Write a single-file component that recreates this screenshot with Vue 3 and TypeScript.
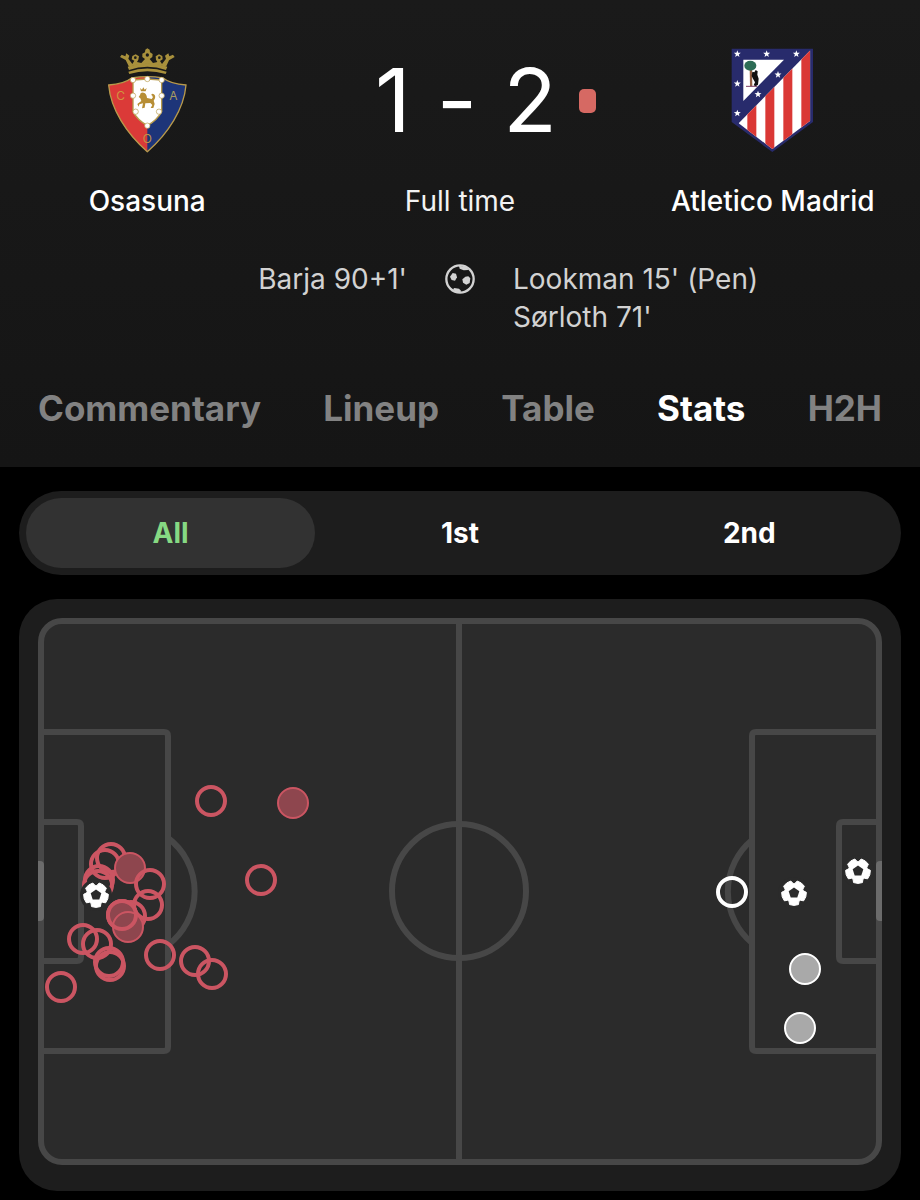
<script setup lang="ts">
import { ref } from 'vue'

type ShotKind = 'miss' | 'saved' | 'goal'
interface Shot {
  x: number
  y: number
  kind: ShotKind
  side: 'away' | 'home'
}

const tabs = ['Commentary', 'Lineup', 'Table', 'Stats', 'H2H']
const activeTab = ref('Stats')

const periods = ['All', '1st', '2nd']
const activePeriod = ref('All')

const shot = (side: Shot['side'], kind: ShotKind, x: number, y: number): Shot => ({ side, kind, x, y })

const shots: Shot[] = [
  shot('home', 'miss', 173, 183),
  shot('home', 'saved', 255, 185),
  shot('home', 'miss', 223, 262),
  shot('home', 'miss', 73, 240),
  shot('home', 'miss', 67, 246),
  shot('home', 'miss', 61, 262),
  shot('home', 'miss', 60, 267),
  shot('home', 'saved', 92, 250),
  shot('home', 'miss', 112, 266),
  shot('home', 'miss', 110, 287),
  shot('home', 'miss', 93, 298),
  shot('home', 'saved', 84, 297),
  shot('home', 'saved', 90, 309),
  shot('home', 'miss', 84, 297),
  shot('home', 'miss', 45, 321),
  shot('home', 'miss', 59, 326),
  shot('home', 'miss', 71, 344),
  shot('home', 'miss', 72, 348),
  shot('home', 'miss', 122, 337),
  shot('home', 'miss', 157, 343),
  shot('home', 'miss', 174, 356),
  shot('home', 'miss', 23, 369),
  shot('home', 'goal', 58, 277),
  shot('away', 'miss', 694, 274),
  shot('away', 'saved', 767, 351),
  shot('away', 'saved', 762, 410),
  shot('away', 'goal', 756, 275),
  shot('away', 'goal', 820, 253),
]

const polar = (radius: number, degrees: number): string => {
  const a = (degrees * Math.PI) / 180
  return `${(radius * Math.cos(a)).toFixed(2)},${(radius * Math.sin(a)).toFixed(2)}`
}

const lobes = [90, 162, 234, 306, 378]
const ballOutline = lobes
  .flatMap((a) => [polar(12.4, a - 21), polar(12.4, a), polar(12.4, a + 21), polar(9.6, a + 31), polar(9.6, a + 41)])
  .join(' ')
const ballCentre = lobes.map((a) => polar(5.6, a + 36)).join(' ')

const starShape = Array.from({ length: 10 }, (_, i) => polar(i % 2 ? 4.6 : 11, i * 36 - 90)).join(' ')
const stars: [number, number][] = [[70, 54], [158, 54], [247, 54], [192, 116], [132, 175], [70, 143], [70, 232]]
const beads: [number, number][] = [[132, 138], [175, 135], [218, 138], [132, 185], [218, 185], [140, 233], [210, 233], [175, 275]]
</script>

<template>
  <main class="page">
    <header class="match">
      <section class="summary">
        <div class="team">
          <svg class="crest" viewBox="54 42 240 315" role="img" aria-label="Osasuna crest">
            <g fill="#a8903c">
              <path d="M116 98 Q175 76 235 98 L231 108 Q175 88 120 108Z" />
              <path d="M118 113 Q175 94 233 113 L230 120 Q175 103 121 120Z" />
              <path d="M120 98 L110 78 L93 69 L98 62 L109 67 L112 58 L121 65 L118 74 L130 90 L136 80 L128 76 L130 66 L140 61 L150 67 L148 77 L144 84 L157 87 L168 75 L160 69 L160 59 L168 55 L169 47 L175 43 L182 47 L183 55 L191 60 L190 69 L182 75 L192 87 L205 84 L201 77 L200 67 L210 61 L220 66 L221 76 L213 81 L219 90 L231 74 L228 65 L238 58 L241 67 L252 62 L257 69 L240 79 L231 98 Q175 80 120 98Z" />
            </g>
            <g fill="#1a1a1a">
              <circle cx="139" cy="71" r="4" /><circle cx="175" cy="63" r="5" /><circle cx="211" cy="71" r="4" />
            </g>
            <path d="M59 153 Q105 150 128 132 Q175 124 222 132 Q245 150 291 153 C285 225 237 300 175 353 C113 300 65 225 59 153Z" fill="#db3a38" />
            <path d="M175 127 Q200 127 222 132 Q245 150 291 153 C285 225 237 300 175 353Z" fill="#1d3579" />
            <path d="M59 153 Q105 150 128 132 Q175 124 222 132 Q245 150 291 153 C285 225 237 300 175 353 C113 300 65 225 59 153Z" fill="none" stroke="#b79a4b" stroke-width="4" />
            <path d="M132 138 L175 135 L218 138 V233 Q205 258 175 275 Q145 258 132 233Z" fill="#fff" stroke="#b79a4b" stroke-width="4" />
            <circle v-for="([x, y], i) in beads" :key="i" :cx="x" :cy="y" r="8" fill="#fff" stroke="#b79a4b" stroke-width="2" />
            <g fill="#b78e35">
              <path d="M153 162 L159 167 L163 160 L167 167 L173 162 L170 172 L156 172Z" />
              <path d="M153 183 Q154 174 164 176 Q173 178 174 192 L188 195 Q194 190 190 185 Q184 181 190 179 Q201 181 198 193 L194 200 L197 210 L193 222 L185 222 L190 213 L184 207 L169 208 L167 221 L159 223 L162 208 L151 211 L149 218 L145 210 L157 201 L154 193 L149 189Z" />
            </g>
            <g class="crest-letters">
              <text x="95" y="199" fill="#d0953f">C</text>
              <text x="253" y="199" fill="#a99a60">A</text>
              <text x="175" y="327" fill="#bd9447">O</text>
            </g>
          </svg>
          <span class="team-name">Osasuna</span>
        </div>

        <div class="result">
          <div class="score-row">
            <div class="score"><span>1</span><span>-</span><span>2</span></div>
            <span class="red-card" role="img" aria-label="Red card"></span>
          </div>
          <span class="status">Full time</span>
        </div>

        <div class="team">
          <svg class="crest" viewBox="51 36 249 315" role="img" aria-label="Atletico Madrid crest">
            <defs>
              <clipPath id="stripes"><path d="M289 43 V254 L175 339 L74 262Z" /></clipPath>
            </defs>
            <path d="M53 38 H297 V258 L175 348 L53 258Z" fill="#282b6c" />
            <g clip-path="url(#stripes)">
              <rect x="70" y="40" width="225" height="305" fill="#fff" />
              <path d="M100 40h27v305h-27zM154 40h27v305h-27zM208 40h27v305h-27zM262 40h27v305h-27z" fill="#da3835" />
            </g>
            <path d="M88 71 H210 L88 195Z" fill="#fff" />
            <path d="M107 96 L114 96 L115 151 L108 151Z" fill="#946044" />
            <ellipse cx="109" cy="89" rx="18" ry="15" fill="#2d6c55" />
            <path d="M115 107 L121 109 L125 102 L131 106 L130 116 L134 128 L132 146 L125 151 L119 148 L123 139 L117 128 L113 120Z" fill="#111" />
            <path d="M96 151 H130" stroke="#7b3e63" stroke-width="3" />
            <polygon v-for="([x, y], i) in stars" :key="i" :points="starShape" :transform="`translate(${x} ${y})`" fill="#fff" />
          </svg>
          <span class="team-name">Atletico Madrid</span>
        </div>
      </section>

      <section class="scorers">
        <div class="scorers-home">Barja 90+1'</div>
        <svg class="goal-icon" viewBox="0 0 90 90" role="img" aria-label="Goals">
          <circle cx="45" cy="45" r="41" fill="none" stroke="currentColor" stroke-width="7" />
          <g fill="currentColor">
            <path d="M23 27 L33 29 L36 40 L30 50 L20 48 L15 38Z" />
            <path d="M61 38 L70 37 L76 43 L74 57 L64 62 L54 56 L52 46Z" />
            <path d="M42 5 L66 10 L70 18 L56 19 L44 14Z" />
            <path d="M24 76 L28 72 L42 74 L48 80 L46 86 L34 85Z" />
          </g>
        </svg>
        <div class="scorers-away">
          <div>Lookman 15' (Pen)</div>
          <div>Sørloth 71'</div>
        </div>
      </section>

      <nav class="tabs" aria-label="Match sections">
        <button
          v-for="tab in tabs"
          :key="tab"
          type="button"
          class="tab"
          :class="{ active: tab === activeTab }"
          @click="activeTab = tab"
        >{{ tab }}</button>
      </nav>
    </header>

    <div class="content">
      <div class="periods" role="group" aria-label="Period">
        <button
          v-for="period in periods"
          :key="period"
          type="button"
          class="period"
          :class="{ active: period === activePeriod }"
          :aria-pressed="period === activePeriod"
          @click="activePeriod = period"
        >{{ period }}</button>
      </div>

      <section class="pitch-card">
        <svg class="pitch" viewBox="0 0 844 547" role="img" aria-label="Shot map">
          <rect x="3" y="3" width="838" height="541" rx="21" fill="#2b2b2b" />
          <g fill="none" stroke="#474747" stroke-width="6">
            <path d="M130 220 A67 67 0 0 1 130 327" />
            <path d="M714 222 A67 67 0 0 0 714 325" />
            <path d="M3 114 H126 Q130 114 130 118 V429 Q130 433 126 433 H3" />
            <path d="M841 114 H718 Q714 114 714 118 V429 Q714 433 718 433 H841" />
            <path d="M3 204 H39 Q43 204 43 208 V339 Q43 343 39 343 H3" />
            <path d="M841 204 H805 Q801 204 801 208 V339 Q801 343 805 343 H841" />
            <path d="M421 3 V544" />
            <circle cx="421" cy="273" r="67" />
            <rect x="3" y="3" width="838" height="541" rx="21" />
          </g>
          <g fill="#6b6b6b">
            <path d="M0 243 H2 Q6 243 6 247 V299 Q6 303 2 303 H0Z" />
            <path d="M844 243 H842 Q838 243 838 247 V299 Q838 303 842 303 H844Z" />
          </g>
          <g v-for="(s, i) in shots" :key="i" :transform="`translate(${s.x} ${s.y})`">
            <template v-if="s.kind === 'goal'">
              <circle r="16" fill="#2b2b2b" />
              <polygon class="ball" :points="ballOutline" />
              <polygon :points="ballCentre" fill="#2b2b2b" />
            </template>
            <circle v-else :r="s.kind === 'miss' ? 14 : 15" :class="['shot', s.side, s.kind]" />
          </g>
        </svg>
      </section>
    </div>
  </main>
</template>

<style>
body {
  margin: 0;
  background: #000;
}
</style>

<style scoped>
.page {
  min-height: 100vh;
  background: #000;
  color: #fff;
  font-family: Inter, "Liberation Sans", sans-serif;
}

button {
  margin: 0;
  border: 0;
  padding: 0;
  background: none;
  font: inherit;
  cursor: pointer;
}

.match {
  padding-top: 48px;
  background: linear-gradient(#1a1a1a, #151515);
}

.summary {
  display: grid;
  grid-template-columns: 32% 1fr 32%;
}

.team,
.result {
  display: flex;
  flex-direction: column;
  align-items: center;
}

.crest {
  height: 105px;
}

.team-name,
.status {
  margin-top: 28px;
  font-size: 28px;
  line-height: 40px;
  white-space: nowrap;
}

.team-name {
  font-weight: 500;
}

.status {
  color: #f2f2f2;
}

.score-row {
  display: grid;
  grid-template-columns: 1fr auto 1fr;
  align-items: center;
  width: 100%;
  height: 105px;
}

.score {
  display: flex;
  grid-column: 2;
  gap: 26px;
  margin-left: 12px;
  font-size: 88px;
  line-height: 105px;
}

.red-card {
  width: 17px;
  height: 24px;
  margin-left: 22px;
  border-radius: 5px;
  background: #d66963;
}

.scorers {
  display: grid;
  grid-template-columns: 1fr 106px 1fr;
  align-items: start;
  margin-top: 39px;
  color: #d2d2d2;
  font-size: 28px;
  line-height: 38px;
}

.scorers-home {
  text-align: right;
}

.goal-icon {
  width: 30px;
  height: 38px;
  justify-self: center;
}

.tabs {
  display: flex;
  justify-content: space-between;
  margin-top: 48px;
  padding: 0 38px 34px;
}

.tab {
  color: #828282;
  font-size: 35px;
  font-weight: 700;
  line-height: 49px;
}

.tab.active {
  color: #fff;
}

.content {
  display: grid;
  gap: 24px;
  padding: 24px 19px 9px;
}

.periods {
  display: grid;
  grid-template-columns: repeat(3, 1fr);
  padding: 7px;
  border-radius: 42px;
  background: #1d1d1d;
}

.period {
  border-radius: 35px;
  color: #fff;
  font-size: 28px;
  font-weight: 700;
  line-height: 70px;
}

.period.active {
  background: #323232;
  color: #86d983;
}

.pitch-card {
  padding: 19px 19px 26px;
  border-radius: 38px;
  background: #1d1d1d;
}

.pitch {
  display: block;
  width: 100%;
}

.crest-letters {
  font-size: 36px;
  text-anchor: middle;
}

.shot.miss {
  fill: none;
  stroke-width: 4;
}

.shot.saved {
  stroke-width: 2;
}

.shot.home {
  stroke: #cb5562;
}

.shot.home.saved {
  fill: #8e464e;
}

.shot.away {
  stroke: #fff;
}

.shot.away.saved {
  fill: #a9a9a9;
}

.ball {
  fill: #fff;
  stroke: #fff;
  stroke-width: 1;
  stroke-linejoin: round;
}
</style>
